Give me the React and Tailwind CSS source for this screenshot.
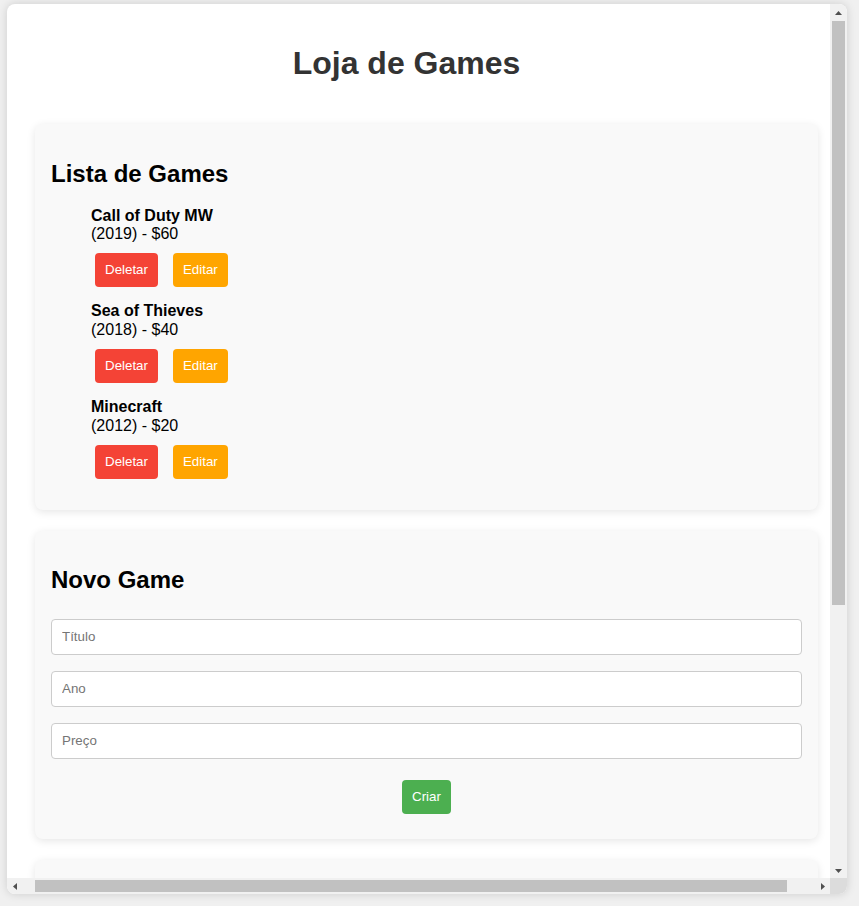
import React, { useEffect, useRef } from 'react';

const games = [
    { id: 1, title: 'Call of Duty MW', year: 2019, price: 60 },
    { id: 2, title: 'Sea of Thieves', year: 2018, price: 40 },
    { id: 3, title: 'Minecraft', year: 2012, price: 20 },
];

const inputClass =
    'h-9 w-full rounded-[4px] border border-[#ccc] bg-white px-[10px] text-[13.33px] text-black placeholder:text-[#757575] outline-none';

const cardClass = 'rounded-lg bg-[#f9f9f9] p-4 shadow-[0_2px_8px_rgba(0,0,0,0.1)]';

const Arrow = ({ dir }) => {
    const points = {
        up: '0,4 3.5,0 7,4',
        down: '0,0 7,0 3.5,4',
        left: '4,0 4,7 0,3.5',
        right: '0,0 0,7 4,3.5',
    }[dir];
    const vertical = dir === 'up' || dir === 'down';
    return (
        <svg width={vertical ? 7 : 4} height={vertical ? 4 : 7} viewBox={vertical ? '0 0 7 4' : '0 0 4 7'}>
            <polygon points={points} fill="#505050" />
        </svg>
    );
};

const GameItem = ({ game }) => (
    <li className="mb-[15px]">
        <div className="leading-[18.4px]">
            <strong className="font-bold">{game.title}</strong>
            <br />
            ({game.year}) - ${game.price}
        </div>
        <div className="mt-[10px] flex gap-[15px] pl-[4px]">
            <button className="h-[34px] rounded-[4px] bg-[#f44336] px-[10px] text-[13.33px] text-white">
                Deletar
            </button>
            <button className="h-[34px] rounded-[4px] bg-[#ffa500] px-[10px] text-[13.33px] text-white">
                Editar
            </button>
        </div>
    </li>
);

const App = () => {
    const paneRef = useRef(null);

    // the reference is scrolled a little to the right
    useEffect(() => {
        if (paneRef.current) paneRef.current.scrollLeft = 14;
    }, []);

    return (
        <div className="min-h-screen bg-[#f0f0f0] pl-[7px] pt-[4px] font-['Liberation_Sans',Arial,sans-serif] text-black">
            <div className="flex h-[890px] w-[840px] flex-col overflow-hidden rounded-lg bg-white shadow-[0_0_10px_rgba(0,0,0,0.15)]">
                <div className="flex min-h-0 flex-1">
                    <div ref={paneRef} className="min-w-0 flex-1 overflow-hidden">
                        <div className="w-[872px] pb-5 pl-[42px] pr-[47px] pt-5">
                            <h1 className="mb-[42px] mt-[21px] pr-10 text-center text-[32px] font-bold leading-[37px] text-[#333]">
                                Loja de Games
                            </h1>

                            <section className={cardClass}>
                                <h2 className="mb-5 mt-[19px] pt-px text-2xl font-bold leading-[27.6px]">Lista de Games</h2>
                                <ul className="-mt-px pl-10">
                                    {games.map((g) => (
                                        <GameItem key={g.id} game={g} />
                                    ))}
                                </ul>
                            </section>

                            <section className={`mt-[21px] ${cardClass}`}>
                                <h2 className="mb-5 mt-[19px] text-2xl font-bold leading-[27.6px]">Novo Game</h2>
                                <form className="flex flex-col gap-4 pt-[5px]" onSubmit={(e) => e.preventDefault()}>
                                    <input className={inputClass} placeholder="Título" />
                                    <input className={inputClass} placeholder="Ano" />
                                    <input className={inputClass} placeholder="Preço" />
                                    <div className="mb-[9px] mt-[5px] flex justify-center">
                                        <button className="h-[34px] rounded-[4px] bg-[#4caf50] px-[10px] text-[13.33px] text-white">
                                            Criar
                                        </button>
                                    </div>
                                </form>
                            </section>

                            <section className={`mt-[21px] h-[389px] ${cardClass}`} />
                        </div>
                    </div>

                    {/* vertical scrollbar */}
                    <div className="flex w-[17px] flex-col items-center bg-[#f1f1f1]">
                        <div className="flex h-[15px] w-full items-center justify-center pt-[2px]">
                            <Arrow dir="up" />
                        </div>
                        <div className="flex-1">
                            <div className="mt-[2px] h-[584px] w-[13px] bg-[#c1c1c1]" />
                        </div>
                        <div className="flex h-[15px] w-full items-center justify-center">
                            <Arrow dir="down" />
                        </div>
                    </div>
                </div>

                {/* horizontal scrollbar */}
                <div className="flex h-[16px]">
                    <div className="flex flex-1 items-center bg-[#f1f1f1]">
                        <div className="flex h-full w-[15px] items-center justify-center">
                            <Arrow dir="left" />
                        </div>
                        <div className="flex-1">
                            <div className="ml-[13px] h-[12px] w-[752px] bg-[#c1c1c1]" />
                        </div>
                        <div className="flex h-full w-[15px] items-center justify-center">
                            <Arrow dir="right" />
                        </div>
                    </div>
                    <div className="w-[17px] bg-[#dcdcdc]" />
                </div>
            </div>
        </div>
    );
};

export default App;
